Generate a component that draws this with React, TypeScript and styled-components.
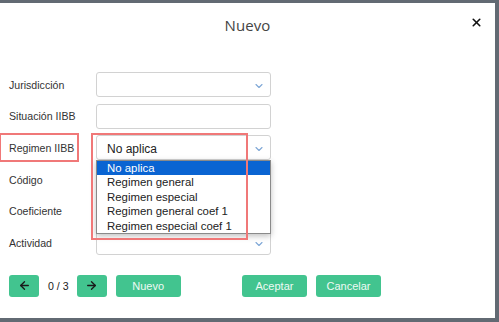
import styled, { createGlobalStyle } from 'styled-components';
import { ArrowLeft, ArrowRight, ChevronDown, X } from 'lucide-react';

const GlobalStyle = createGlobalStyle`
  html, body {
    margin: 0;
    padding: 0;
    background: #626a73;
    width: 499px;
    height: 322px;
    overflow: hidden;
  }
  * { box-sizing: border-box; }
`;

const ROWS = [
  { label: 'Jurisdicción', kind: 'select', value: '' },
  { label: 'Situación IIBB', kind: 'input', value: '' },
  { label: 'Regimen IIBB', kind: 'select', value: 'No aplica' },
  { label: 'Código', kind: 'input', value: '' },
  { label: 'Coeficiente', kind: 'input', value: '' },
  { label: 'Actividad', kind: 'select', value: '' },
];

const OPTIONS = [
  'No aplica',
  'Regimen general',
  'Regimen especial',
  'Regimen general coef 1',
  'Regimen especial coef 1',
];

function Field({ kind, value }: { kind: string; value: string }) {
  if (kind === 'select') {
    return (
      <StyledSelect>
        <span>{value}</span>
        <ChevronDown size={12} strokeWidth={2.2} color="#7ea7d6" />
      </StyledSelect>
    );
  }
  return <StyledInput />;
}

export default function App() {
  return (
    <>
      <GlobalStyle />
      <StyledModal>
        <StyledHeader>
          <StyledTitle>Nuevo</StyledTitle>
          <StyledClose>
            <X size={13} strokeWidth={3} />
          </StyledClose>
        </StyledHeader>
        <StyledForm>
          {ROWS.map((row) => (
            <StyledRow key={row.label}>
              <StyledLabel>{row.label}</StyledLabel>
              <Field kind={row.kind} value={row.value} />
            </StyledRow>
          ))}
          <StyledList>
            {OPTIONS.map((opt, i) => (
              <StyledOption key={opt} active={i === 0}>
                {opt}
              </StyledOption>
            ))}
          </StyledList>
          <StyledMarkLabel />
          <StyledMarkSelect />
        </StyledForm>
        <StyledFooter>
          <StyledButton narrow>
            <ArrowLeft size={13} strokeWidth={2.5} />
          </StyledButton>
          <StyledCounter>0 / 3</StyledCounter>
          <StyledButton narrow>
            <ArrowRight size={13} strokeWidth={2.5} />
          </StyledButton>
          <StyledButton>Nuevo</StyledButton>
          <StyledSpacer />
          <StyledButton>Aceptar</StyledButton>
          <StyledButton>Cancelar</StyledButton>
        </StyledFooter>
      </StyledModal>
    </>
  );
}

const StyledModal = styled.div`
  margin-top: 3px;
  width: 495px;
  height: 315px;
  background: #fff;
  font-family: 'Liberation Sans', Arial, sans-serif;
  color: #333;
`;

const StyledHeader = styled.div`
  position: relative;
  height: 66px;
  display: flex;
  justify-content: center;
  padding-top: 12px;
`;

const StyledTitle = styled.div`
  font-family: 'Open Sans', sans-serif;
  font-size: 15px;
  color: #444;
  letter-spacing: 0.1px;
`;

const StyledClose = styled.div`
  position: absolute;
  right: 12px;
  top: 12px;
  color: #111;
`;

const StyledForm = styled.div`
  position: relative;
  padding-left: 9px;
`;

const StyledRow = styled.div`
  display: flex;
  align-items: center;
  height: 31.6px;
`;

const StyledLabel = styled.div`
  width: 87px;
  font-size: 10.6px;
  color: #333;
`;

const StyledInput = styled.div`
  width: 175px;
  height: 25px;
  border: 1px solid #d2d2d2;
  border-radius: 3px;
  background: #fff;
`;

const StyledSelect = styled(StyledInput)`
  display: flex;
  align-items: center;
  justify-content: space-between;
  padding: 2px 5px 0 10px;
  font-size: 12px;
  color: #222;
`;

const StyledList = styled.div`
  position: absolute;
  left: 96px;
  top: 91px;
  width: 175px;
  border: 1px solid #8a8a8a;
  background: #fff;
  box-shadow: 0 2px 6px rgba(0, 0, 0, 0.25);
`;

const StyledOption = styled.div<{ active?: boolean }>`
  height: 14.4px;
  line-height: 14px;
  padding-left: 10px;
  font-size: 11.4px;
  color: ${(p) => (p.active ? '#fff' : '#222')};
  background: ${(p) => (p.active ? '#0a64d2' : '#fff')};
`;

const StyledMarkLabel = styled.div`
  position: absolute;
  left: -1px;
  top: 64px;
  width: 80px;
  height: 29px;
  border: 2px solid #f07878;
`;

const StyledMarkSelect = styled.div`
  position: absolute;
  left: 91px;
  top: 64px;
  width: 157px;
  height: 107px;
  border: 2px solid #f07878;
`;

const StyledFooter = styled.div`
  display: flex;
  align-items: center;
  gap: 9px;
  padding: 16px 0 0 9px;
  width: 381px;
`;

const StyledButton = styled.div<{ narrow?: boolean }>`
  display: flex;
  align-items: center;
  justify-content: center;
  flex-shrink: 0;
  width: ${(p) => (p.narrow ? '30px' : '65px')};
  height: 22px;
  border-radius: 3px;
  background: #42c48f;
  color: ${(p) => (p.narrow ? '#1a1a1a' : '#eefaf4')};
  font-size: 11px;
`;

const StyledCounter = styled.div`
  font-size: 10.6px;
  color: #222;
  white-space: nowrap;
  margin-right: -1px;
`;

const StyledSpacer = styled.div`
  flex: 1;
`;
